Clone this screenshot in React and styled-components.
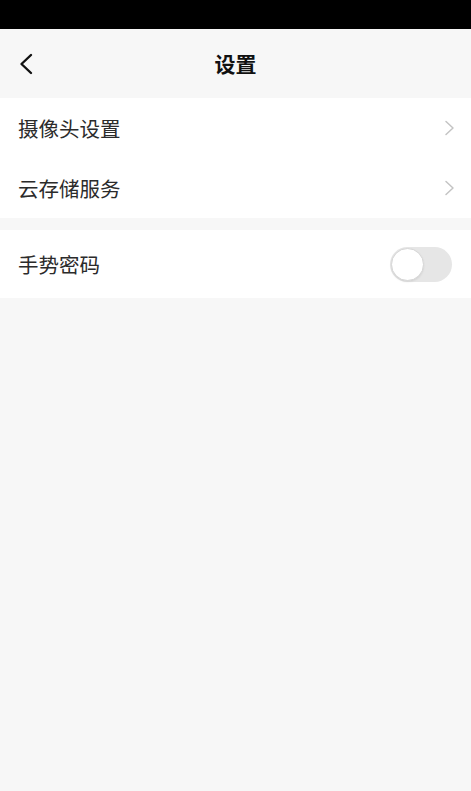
import React, { useState } from "react";
import styled, { createGlobalStyle } from "styled-components";

const GlobalStyle = createGlobalStyle`
  html, body {
    margin: 0;
    padding: 0;
    background-color: #f7f7f7;
  }
  body {
    font-family: "Noto Sans CJK SC", "Noto Sans", sans-serif;
  }
`;

const Page = styled.div`
  min-height: 791px;
  background-color: #f7f7f7;
  display: flex;
  flex-direction: column;
`;

const StatusBar = styled.div`
  height: 29px;
  background-color: #000000;
`;

const NavBar = styled.div`
  height: 69px;
  display: grid;
  grid-template-columns: 60px 1fr 60px;
  align-items: center;
  background-color: #f7f7f7;
`;

const BackButton = styled.button`
  border: 0;
  background: transparent;
  padding: 0 0 0 18px;
  height: 100%;
  display: flex;
  align-items: center;
  cursor: pointer;
`;

const Title = styled.h1`
  margin: 0;
  text-align: center;
  font-size: 21px;
  font-weight: 700;
  color: #111111;
  line-height: 1;
`;

const Group = styled.div`
  background-color: #ffffff;
  display: flex;
  flex-direction: column;
  margin-bottom: ${(props) => props.$gap || 0}px;
`;

const Row = styled.div`
  height: ${(props) => props.$height}px;
  display: flex;
  align-items: center;
  justify-content: space-between;
  padding: 0 ${(props) => props.$right}px 0 18px;
  cursor: pointer;
`;

const Label = styled.span`
  font-size: 20.5px;
  color: #2b2b2b;
  line-height: 1;
`;

const Track = styled.div`
  width: 62px;
  height: 35px;
  border-radius: 18px;
  background-color: ${(props) => (props.$on ? "#4cd964" : "#e6e6e6")};
  display: flex;
  align-items: center;
  justify-content: ${(props) => (props.$on ? "flex-end" : "flex-start")};
  padding: 1px;
  box-sizing: border-box;
`;

const Knob = styled.div`
  width: 33px;
  height: 33px;
  border-radius: 50%;
  background-color: #ffffff;
  border: 1px solid #d6d6d6;
  box-sizing: border-box;
  box-shadow: 0 1px 2px rgba(0, 0, 0, 0.08);
`;

const BackIcon = () => (
  <svg width="16" height="22" viewBox="0 0 16 22">
    <path d="M13 2 L3.5 11 L13 20" fill="none" stroke="#111" strokeWidth="2.4" strokeLinecap="round" strokeLinejoin="round" />
  </svg>
);

const ArrowIcon = () => (
  <svg width="11" height="16" viewBox="0 0 11 16">
    <path d="M2 1.5 L9 8 L2 14.5" fill="none" stroke="#c4c4c4" strokeWidth="1.5" strokeLinecap="round" strokeLinejoin="round" />
  </svg>
);

function App() {
  const [gesture, setGesture] = useState(false);

  return (
    <Page>
      <GlobalStyle />
      <StatusBar />
      <NavBar>
        <BackButton>
          <BackIcon />
        </BackButton>
        <Title>设置</Title>
        <div />
      </NavBar>
      <Group $gap={12}>
        <Row $height={60} $right={16}>
          <Label>摄像头设置</Label>
          <ArrowIcon />
        </Row>
        <Row $height={60} $right={16}>
          <Label>云存储服务</Label>
          <ArrowIcon />
        </Row>
      </Group>
      <Group>
        <Row $height={68} $right={19} onClick={() => setGesture(!gesture)}>
          <Label>手势密码</Label>
          <Track $on={gesture}>
            <Knob />
          </Track>
        </Row>
      </Group>
    </Page>
  );
}

export default App;
